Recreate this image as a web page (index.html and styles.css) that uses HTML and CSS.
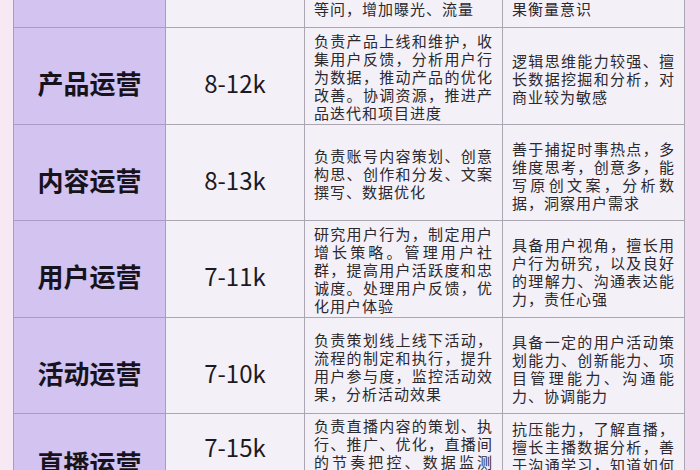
FILE: index.html
```html
<!DOCTYPE html>
<html lang="zh">
<head>
<meta charset="utf-8">
<link rel="stylesheet" href="styles.css">
</head>
<body>
<table class="jobs">
  <colgroup>
    <col class="c-name"><col class="c-pay"><col class="c-duty"><col class="c-skill">
  </colgroup>
  <tr class="row row-top">
    <td class="name">新媒体运营</td>
    <td class="pay">6-10k</td>
    <td class="duty">负责新媒体平台的日常运营，策划推广活动，提升粉丝数量，引导舆论<br>等问，增加曝光、流量</td>
    <td class="skill">文字功底好，有网感，有结<br>果衡量意识</td>
  </tr>
  <tr class="row">
    <td class="name">产品运营</td>
    <td class="pay">8-12k</td>
    <td class="duty">负责产品上线和维护，收集用户反馈，分析用户行为数据，推动产品的优化改善。协调资源，推进产品迭代和项目进度</td>
    <td class="skill">逻辑思维能力较强、擅长数据挖掘和分析，对商业较为敏感</td>
  </tr>
  <tr class="row">
    <td class="name">内容运营</td>
    <td class="pay">8-13k</td>
    <td class="duty">负责账号内容策划、创意构思、创作和分发、文案撰写、数据优化</td>
    <td class="skill">善于捕捉时事热点，多维度思考，创意多，能写原创文案，分析数据，洞察用户需求</td>
  </tr>
  <tr class="row">
    <td class="name">用户运营</td>
    <td class="pay">7-11k</td>
    <td class="duty">研究用户行为，制定用户增长策略。管理用户社群，提高用户活跃度和忠诚度。处理用户反馈，优化用户体验</td>
    <td class="skill">具备用户视角，擅长用户行为研究，以及良好的理解力、沟通表达能力，责任心强</td>
  </tr>
  <tr class="row">
    <td class="name">活动运营</td>
    <td class="pay">7-10k</td>
    <td class="duty">负责策划线上线下活动，流程的制定和执行，提升用户参与度，监控活动效果，分析活动效果</td>
    <td class="skill">具备一定的用户活动策划能力、创新能力、项目管理能力、沟通能力、协调能力</td>
  </tr>
  <tr class="row row-last">
    <td class="name">直播运营</td>
    <td class="pay">7-15k</td>
    <td class="duty">负责直播内容的策划、执行、推广、优化，直播间的节奏把控、数据监测等，提升直播间人气，维护粉丝关系</td>
    <td class="skill">抗压能力，了解直播，擅长主播数据分析，善于沟通学习，知道如何调动直播间氛围</td>
  </tr>
</table>
</body>
</html>
```

FILE: styles.css
```css
html, body {
  margin: 0;
  padding: 0;
}
body {
  width: 700px;
  height: 470px;
  overflow: hidden;
  background: linear-gradient(90deg, #f7e9f3 0%, #f3e3f1 50%, #efd9ef 100%);
  font-family: "Noto Sans CJK SC", "Noto Sans", sans-serif;
}
.jobs {
  border-collapse: collapse;
  table-layout: fixed;
  width: 671px;
  margin: -69px 0 0 13px;
}
.c-name { width: 152px; }
.c-pay { width: 139px; }
.c-duty { width: 198px; }
.c-skill { width: 182px; }

.row { height: 96px; }

.jobs td {
  border: 1px solid #aca6b3;
  background: #f4f0f7;
  vertical-align: middle;
  padding: 0;
}
.jobs td.name {
  background: #d2c3f1;
  border-color: #a99ac6;
  text-align: center;
  font-size: 26px;
  line-height: 30px;
  font-weight: 700;
  color: #17131d;
  padding-top: 14px;
}
.jobs td.pay {
  text-align: center;
  font-size: 24px;
  line-height: 30px;
  color: #1c1a1f;
  padding-top: 14px;
}
.jobs td.duty,
.jobs td.skill {
  font-size: 15px;
  line-height: 18px;
  letter-spacing: 1px;
  color: #2b282e;
  text-align: justify;
  padding: 4px 9px 2px 9px;
}
.jobs td.skill {
  padding-top: 8px;
}

.row-top td {
  vertical-align: bottom;
}
.row-top td.duty,
.row-top td.skill {
  padding-bottom: 9px;
}
.row-top td.name {
  padding-bottom: 29px;
}
.row-top td.pay {
  vertical-align: top;
}

.row-last { height: 130px; }
.row-last td {
  vertical-align: top;
}
.row-last td.name { padding-top: 34px; }
.row-last td.pay { padding-top: 18px; }
.row-last td.duty { padding-top: 3px; }
.row-last td.skill { padding-top: 6px; }
```
